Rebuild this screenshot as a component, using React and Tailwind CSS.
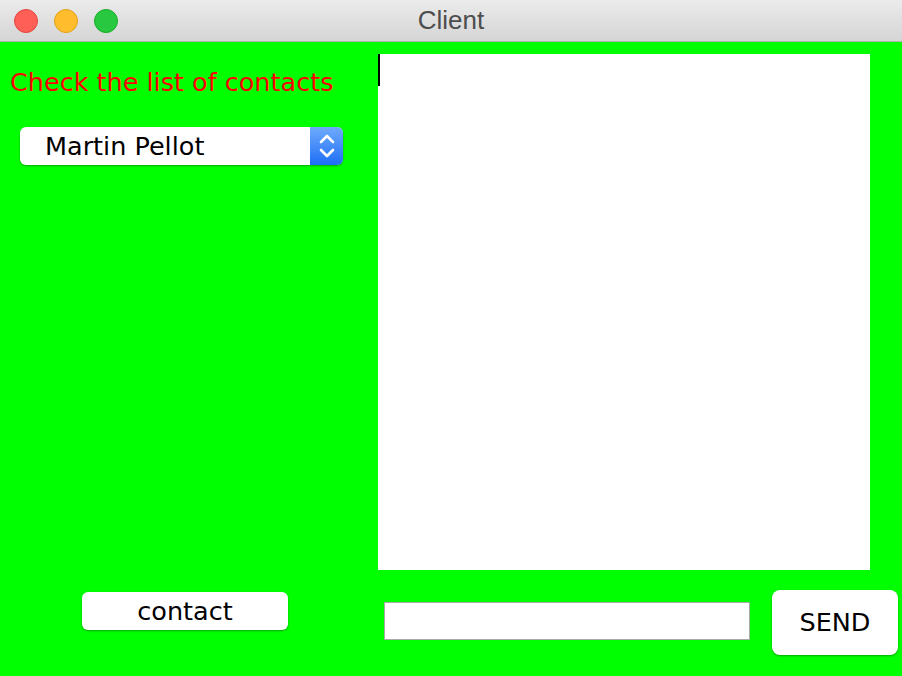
import React from 'react';

// Window chrome: traffic lights + centered title
function TitleBar() {
  return (
    <div className="relative flex h-[42px] items-center border-b border-[#b3b3b3] bg-gradient-to-b from-[#ebebeb] to-[#d5d5d5] px-[14px]">
      <div className="flex gap-[16px]">
        <span className="h-[24px] w-[24px] rounded-full border border-[#e2463f] bg-[#ff5f57]" />
        <span className="h-[24px] w-[24px] rounded-full border border-[#e1a116] bg-[#ffbd2e]" />
        <span className="h-[24px] w-[24px] rounded-full border border-[#1aab29] bg-[#28c940]" />
      </div>
      <div className="absolute inset-0 flex items-center justify-center font-['Liberation_Sans',Arial,sans-serif] text-[26px] text-[#4d4d4d]">
        Client
      </div>
    </div>
  );
}

function ContactSelect() {
  return (
    <div className="flex h-[38px] w-[323px] overflow-hidden rounded-[6px] bg-white shadow-[0_1px_2px_rgba(0,0,0,0.35)]">
      <div className="flex flex-1 items-center pl-[25px] text-[25.5px] text-black">Martin Pellot</div>
      <div className="flex w-[33px] items-center justify-center bg-gradient-to-b from-[#6eaafc] to-[#1b6ef6]">
        <svg width="18" height="30" viewBox="0 0 18 30" fill="none" stroke="white" strokeWidth="2.6" strokeLinecap="round" strokeLinejoin="round">
          <path d="M3 11 L9 5 L15 11" />
          <path d="M3 19 L9 25 L15 19" />
        </svg>
      </div>
    </div>
  );
}

export default function App() {
  return (
    <div className="flex h-[676px] w-[902px] flex-col font-['DejaVu_Sans',Verdana,sans-serif]">
      <TitleBar />
      <div className="flex flex-1 bg-[#00ff00]">
        {/* left column */}
        <div className="flex w-[378px] flex-col pl-[10px]">
          <p className="mt-[24px] text-[25.5px] leading-[32px] text-[#ff0000]">Check the list of contacts</p>
          <div className="mt-[29px] pl-[10px]">
            <ContactSelect />
          </div>
          <div className="flex-1" />
          <div className="mb-[46px] pl-[72px]">
            <button className="flex h-[38px] w-[206px] items-center justify-center rounded-[6px] bg-white text-[25.5px] text-black shadow-[0_1px_2px_rgba(0,0,0,0.35)]">
              contact
            </button>
          </div>
        </div>

        {/* right column */}
        <div className="flex flex-1 flex-col pt-[12px]">
          <div className="h-[516px] w-[492px] bg-white">
            <div className="h-[32px] w-[2px] bg-black" />
          </div>
          <div className="mt-[20px] flex items-start">
            <input className="ml-[6px] mt-[12px] h-[38px] w-[366px] border border-[#a9a9a9] bg-white outline-none" />
            <button className="ml-[22px] flex h-[65px] w-[126px] items-center justify-center rounded-[8px] bg-white text-[25.5px] text-black shadow-[0_1px_2px_rgba(0,0,0,0.35)]">
              SEND
            </button>
          </div>
        </div>
      </div>
    </div>
  );
}
